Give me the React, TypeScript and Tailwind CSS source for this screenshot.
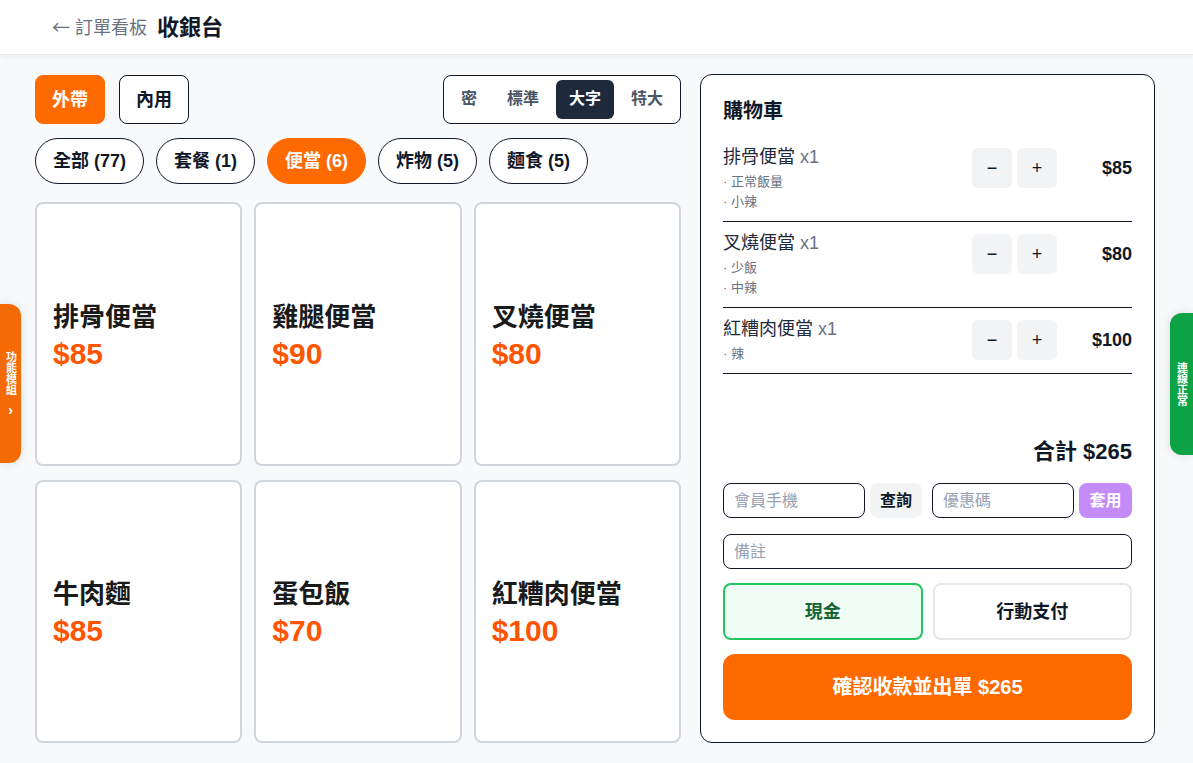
import React, { useState } from "react";

interface Product {
  name: string;
  price: number;
}

interface CartItem {
  name: string;
  qty: number;
  price: number;
  notes: string[];
}

const products: Product[] = [
  { name: "排骨便當", price: 85 },
  { name: "雞腿便當", price: 90 },
  { name: "叉燒便當", price: 80 },
  { name: "牛肉麵", price: 85 },
  { name: "蛋包飯", price: 70 },
  { name: "紅糟肉便當", price: 100 },
];

const categories = ["全部 (77)", "套餐 (1)", "便當 (6)", "炸物 (5)", "麵食 (5)"];
const densities = ["密", "標準", "大字", "特大"];

const cart: CartItem[] = [
  { name: "排骨便當", qty: 1, price: 85, notes: ["正常飯量", "小辣"] },
  { name: "叉燒便當", qty: 1, price: 80, notes: ["少飯", "中辣"] },
  { name: "紅糟肉便當", qty: 1, price: 100, notes: ["辣"] },
];

const App: React.FC = () => {
  const [mode, setMode] = useState("外帶");
  const [category, setCategory] = useState("便當 (6)");
  const [density, setDensity] = useState("大字");
  const [payment, setPayment] = useState("現金");

  const total = cart.reduce((sum, item) => sum + item.price * item.qty, 0);

  return (
    <div className="relative flex h-screen flex-col overflow-hidden bg-[#f8f9fb] font-['Liberation_Sans','Noto_Sans_CJK_TC',sans-serif] text-gray-900">
      {/* header */}
      <header className="flex h-[55px] shrink-0 items-center gap-[10px] border-b border-gray-200 bg-white px-[52px] shadow-[0_2px_6px_rgba(0,0,0,0.06)]">
        <span className="text-lg text-gray-500">
          <span className="font-['Noto_Sans_CJK_TC',sans-serif]">←</span> 訂單看板
        </span>
        <h1 className="text-[22px] font-bold text-[#111827]">收銀台</h1>
      </header>

      <main className="flex min-h-0 flex-1 gap-[19px] pb-[20px] pl-[35px] pr-[38px] pt-[19px]">
        {/* left column */}
        <section className="flex min-w-0 flex-1 flex-col">
          <div className="flex items-center justify-between">
            <div className="flex gap-3.5 pt-px">
              {["外帶", "內用"].map((m) => (
                <button
                  key={m}
                  onClick={() => setMode(m)}
                  className={`h-[49px] rounded-lg border px-4 text-lg font-bold ${
                    mode === m
                      ? "border-[#ff6a00] bg-[#ff6a00] text-white"
                      : "border-gray-900 bg-white text-gray-900"
                  }`}
                >
                  {m}
                </button>
              ))}
            </div>
            <div className="flex gap-1 rounded-lg border border-gray-900 bg-white p-1">
              {densities.map((d) => (
                <button
                  key={d}
                  onClick={() => setDensity(d)}
                  className={`h-[39px] rounded-md px-[13px] text-base font-bold ${
                    density === d ? "bg-[#1e293b] text-white" : "text-gray-600"
                  }`}
                >
                  {d}
                </button>
              ))}
            </div>
          </div>

          <div className="mt-3.5 flex gap-3">
            {categories.map((c) => (
              <button
                key={c}
                onClick={() => setCategory(c)}
                className={`h-[46px] rounded-full border px-[17px] text-lg font-bold ${
                  category === c
                    ? "border-[#ff6a00] bg-[#ff6a00] text-white"
                    : "border-gray-900 bg-white text-gray-900"
                }`}
              >
                {c}
              </button>
            ))}
          </div>

          <div className="mt-[18px] grid min-h-0 flex-1 grid-cols-3 grid-rows-2 gap-x-3 gap-y-3.5">
            {products.map((p) => (
              <button
                key={p.name}
                className="flex flex-col items-start justify-center rounded-lg border-2 border-gray-300 bg-white px-4 pt-1 text-left"
              >
                <span className="text-[26px] font-bold leading-[34px] text-[#1a1a1a]">{p.name}</span>
                <span className="mt-0.5 text-[30px] font-bold leading-9 text-[#ff5500]">
                  ${p.price}
                </span>
              </button>
            ))}
          </div>
        </section>

        {/* cart */}
        <aside className="flex w-[455px] shrink-0 flex-col rounded-xl border border-gray-900 bg-white p-[22px]">
          <h2 className="mb-[11px] text-xl font-bold leading-7 text-[#111827]">購物車</h2>
          <ul>
            {cart.map((item) => (
              <li key={item.name} className="flex items-start border-b border-gray-900 pb-[9px] pt-2">
                <div className="min-w-0 flex-1">
                  <div className="text-lg leading-[26px] text-gray-800">
                    {item.name} <span className="text-gray-500">x{item.qty}</span>
                  </div>
                  <div className="mt-[2px]">
                    {item.notes.map((n) => (
                      <div key={n} className="text-[13px] leading-5 text-gray-500">
                        · {n}
                      </div>
                    ))}
                  </div>
                </div>
                <div className="mt-1 flex items-center">
                  <div className="flex gap-[5px]">
                    <button className="flex h-10 w-10 items-center justify-center rounded-md bg-gray-100 text-lg text-gray-900">
                      −
                    </button>
                    <button className="flex h-10 w-10 items-center justify-center rounded-md bg-gray-100 text-lg text-gray-900">
                      +
                    </button>
                  </div>
                  <span className="w-[75px] text-right text-lg font-bold text-gray-900">
                    ${item.price}
                  </span>
                </div>
              </li>
            ))}
          </ul>

          <div className="flex-1" />

          <div className="mb-4 text-right text-[22px] font-bold leading-[30px] text-gray-900">合計 ${total}</div>

          <div className="flex items-center">
            <input
              placeholder="會員手機"
              className="h-[35px] min-w-0 flex-1 rounded-lg border border-gray-900 px-2.5 text-base placeholder:text-gray-400"
            />
            <button className="ml-[5px] h-[35px] w-[52px] rounded-lg bg-gray-100 text-base font-bold text-gray-900">
              查詢
            </button>
            <input
              placeholder="優惠碼"
              className="ml-[10px] h-[35px] min-w-0 flex-1 rounded-lg border border-gray-900 px-2.5 text-base placeholder:text-gray-400"
            />
            <button className="ml-[5px] h-[35px] w-[53px] rounded-lg bg-[#c48cf8] text-base font-bold text-white">
              套用
            </button>
          </div>

          <input
            placeholder="備註"
            className="mt-4 h-[35px] w-full rounded-lg border border-gray-900 px-2.5 text-base placeholder:text-gray-400"
          />

          <div className="mt-3.5 flex gap-[10px]">
            {["現金", "行動支付"].map((p) => (
              <button
                key={p}
                onClick={() => setPayment(p)}
                className={`h-[57px] flex-1 rounded-lg border-2 text-lg font-bold ${
                  payment === p
                    ? "border-[#22c55e] bg-[#f0fdf4] text-[#166534]"
                    : "border-gray-200 bg-white text-gray-900"
                }`}
              >
                {p}
              </button>
            ))}
          </div>

          <button className="mt-3.5 h-[66px] w-full rounded-xl bg-[#ff6a00] text-xl font-bold text-white">
            確認收款並出單 ${total}
          </button>
        </aside>
      </main>

      {/* side tabs */}
      <button className="absolute left-0 top-[304px] flex h-[159px] w-[21px] flex-col items-center justify-center gap-2 rounded-r-xl bg-[#f46a04] text-white shadow-[0_0_10px_rgba(0,0,0,0.12)]">
        <span className="text-[11px] font-bold leading-[12px] [writing-mode:vertical-rl]">功能模組</span>
        <span className="text-sm font-bold leading-none">›</span>
      </button>
      <div className="absolute right-0 top-[313px] flex h-[142px] w-[23px] items-center justify-center rounded-l-xl bg-[#0ba345] text-white shadow-[0_0_10px_rgba(0,0,0,0.12)]">
        <span className="text-[11px] font-bold leading-[12px] [writing-mode:vertical-rl]">連線正常</span>
      </div>
    </div>
  );
};

export default App;
